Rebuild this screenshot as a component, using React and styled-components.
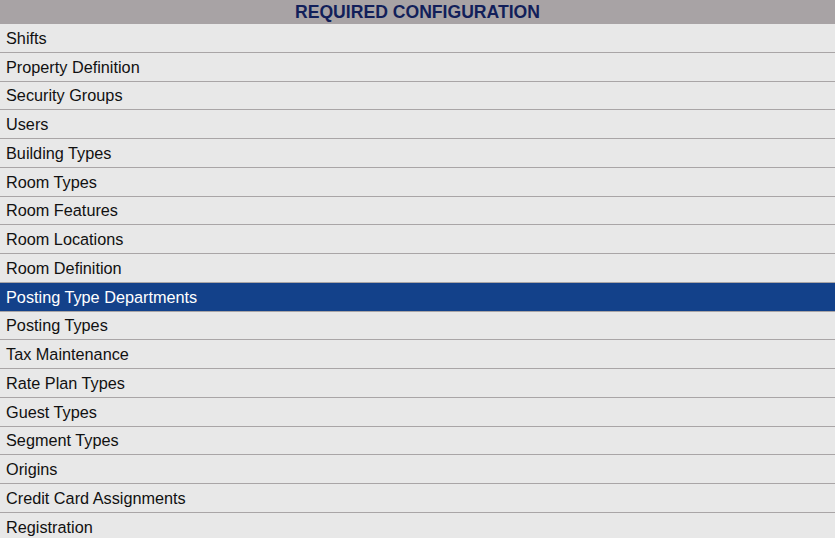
import React from 'react'
import styled, { createGlobalStyle } from 'styled-components'

const GlobalStyle = createGlobalStyle`
  body {
    margin: 0;
    background: #e8e8e8;
    font-family: "Liberation Sans", Arial, sans-serif;
  }
`

const Panel = styled.div`
  width: 835px;
  display: flex;
  flex-direction: column;
`
const Header = styled.div`
  height: 24px;
  background-color: #a8a3a5;
  color: #121f5a;
  font-weight: bold;
  font-size: 17.6px;
  display: flex;
  align-items: center;
  justify-content: center;
`
const Row = styled.div`
  box-sizing: border-box;
  height: 28.75px;
  padding: 1px 6px 0;
  display: flex;
  align-items: center;
  font-size: 16.25px;
  color: ${props => (props.selected ? '#ffffff' : '#111111')};
  background-color: ${props => (props.selected ? '#13418a' : '#e8e8e8')};
  border-bottom: 1px solid #a9a5a6;
`

const items = [
  'Shifts',
  'Property Definition',
  'Security Groups',
  'Users',
  'Building Types',
  'Room Types',
  'Room Features',
  'Room Locations',
  'Room Definition',
  'Posting Type Departments',
  'Posting Types',
  'Tax Maintenance',
  'Rate Plan Types',
  'Guest Types',
  'Segment Types',
  'Origins',
  'Credit Card Assignments',
  'Registration',
]

const App = () => (
  <>
    <GlobalStyle />
    <Panel>
      <Header>REQUIRED CONFIGURATION</Header>
      {items.map(item => (
        <Row key={item} selected={item === 'Posting Type Departments'}>
          {item}
        </Row>
      ))}
    </Panel>
  </>
)

export default App
